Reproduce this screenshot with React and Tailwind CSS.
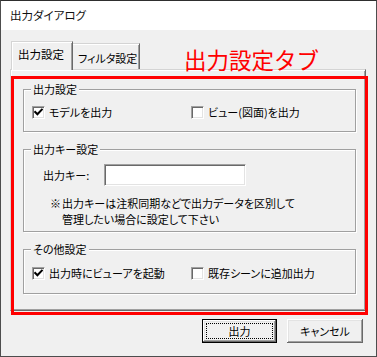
import React from "react";

function Check({ checked }) {
  return (
    <span className="w-[13px] h-[13px] shrink-0 bg-white border border-t-[#a0a0a0] border-l-[#a0a0a0] border-b-white border-r-white shadow-[inset_1px_1px_0_#696969,inset_-1px_-1px_0_#e3e3e3] flex items-center justify-center">
      {checked && (
        <svg width="9" height="9" viewBox="0 0 9 9">
          <path d="M1.2 4 L3.4 6.3 L7.8 1.6" fill="none" stroke="#000" strokeWidth="2" strokeLinecap="square" />
        </svg>
      )}
    </span>
  );
}

function Group({ label, className, children }) {
  return (
    <div className={"relative border border-[#a0a0a0] shadow-[inset_1px_1px_0_#fff,1px_1px_0_#fff] " + className}>
      <span className="absolute left-[7px] top-[-9px] bg-[#f0f0f0] px-[2px] leading-[16px] whitespace-nowrap">{label}</span>
      {children}
    </div>
  );
}

export default function App() {
  return (
    <div className="w-[377px] h-[357px] bg-[#f0f0f0] border border-[#4d4d4d] border-t-[#2e2e2e] flex flex-col relative font-['Noto_Sans_CJK_JP',sans-serif] text-[11px] text-black [font-feature-settings:'palt'] overflow-hidden whitespace-nowrap">
      <div className="h-[29px] bg-white flex items-center pl-[9px] text-[11.5px] text-[#111]">出力ダイアログ</div>
      <div className="pl-[9px] pt-[11px]">
        <div className="flex items-end h-[28px] pl-[1px] relative z-10">
          <div className="w-[62px] h-[29px] mb-[-1px] bg-[#f0f0f0] border-t border-l border-[#d4d4d4] border-r border-r-[#696969] shadow-[inset_1px_1px_0_#fff,inset_-1px_0_0_#a0a0a0] pl-[6px] pt-[4px] leading-[16px] text-[11.5px]">
            出力設定
          </div>
          <div className="w-[67px] h-[26px] bg-[#f0f0f0] border-t border-[#d4d4d4] border-r border-r-[#696969] shadow-[inset_0_1px_0_#fff,inset_-1px_0_0_#a0a0a0] pl-[5px] pt-[6px] leading-[16px] text-[11px]">
            フィルタ設定
          </div>
        </div>
        <div className="w-[356px] h-[242px] border border-t-[#d4d4d4] border-l-[#d4d4d4] border-r-[#696969] border-b-[#696969] shadow-[inset_1px_1px_0_#fff,inset_-1px_-1px_0_#a0a0a0] pl-[12px] pr-[9px] pt-[19px] flex flex-col">
          <Group label="出力設定" className="h-[43px]">
            <div className="flex items-center h-[13px] mt-[16px] pl-[8px]">
              <span className="w-[159px] flex items-center">
                <Check checked />
                <span className="ml-[4px] leading-[13px]">モデルを出力</span>
              </span>
              <span className="flex items-center">
                <Check />
                <span className="ml-[4px] leading-[13px]">ビュー(図面)を出力</span>
              </span>
            </div>
          </Group>
          <Group label="出力キー設定" className="h-[83px] mt-[17px]">
            <div className="flex items-center mt-[14px] pl-[19px]">
              <span className="w-[61px] leading-[16px]">出力キー:</span>
              <div className="w-[142px] h-[22px] bg-white border border-t-[#a0a0a0] border-l-[#a0a0a0] border-b-white border-r-white shadow-[inset_1px_1px_0_#696969,inset_-1px_-1px_0_#e3e3e3]" />
            </div>
            <div className="flex mt-[9px] pl-[26px] leading-[16px]">
              <span className="w-[12px] shrink-0">※</span>
              <span>
                出力キーは注釈同期などで出力データを区別して
                <br />
                管理したい場合に設定して下さい
              </span>
            </div>
          </Group>
          <Group label="その他設定" className="h-[45px] mt-[17px]">
            <div className="flex items-center h-[13px] mt-[17px] pl-[8px]">
              <span className="w-[159px] flex items-center">
                <Check checked />
                <span className="ml-[4px] leading-[13px]">出力時にビューアを起動</span>
              </span>
              <span className="flex items-center">
                <Check />
                <span className="ml-[4px] leading-[13px]">既存シーンに追加出力</span>
              </span>
            </div>
          </Group>
        </div>
      </div>
      <div className="flex justify-end gap-[10px] mt-[8px] pr-[13px]">
        <div className="w-[75px] h-[24px] border border-black bg-[#f0f0f0] shadow-[inset_-1px_-1px_0_#696969,inset_1px_1px_0_#fff,inset_-2px_-2px_0_#a0a0a0,inset_2px_2px_0_#e3e3e3] p-[3px]">
          <div className="w-full h-full border border-dotted border-black flex items-center justify-center leading-[14px]">出力</div>
        </div>
        <div className="w-[76px] h-[24px] bg-[#f0f0f0] shadow-[inset_-1px_-1px_0_#696969,inset_1px_1px_0_#fff,inset_-2px_-2px_0_#a0a0a0,inset_2px_2px_0_#e3e3e3] flex items-center justify-center leading-[14px]">
          キャンセル
        </div>
      </div>
      <div className="absolute left-[10px] top-[75px] w-[357px] h-[239px] border-[3px] border-[#ff0000] pointer-events-none" />
      <div className="absolute left-[183px] top-[44px] text-[#ff0000] text-[22.5px] leading-[28px] [font-feature-settings:normal]">出力設定タブ</div>
    </div>
  );
}
